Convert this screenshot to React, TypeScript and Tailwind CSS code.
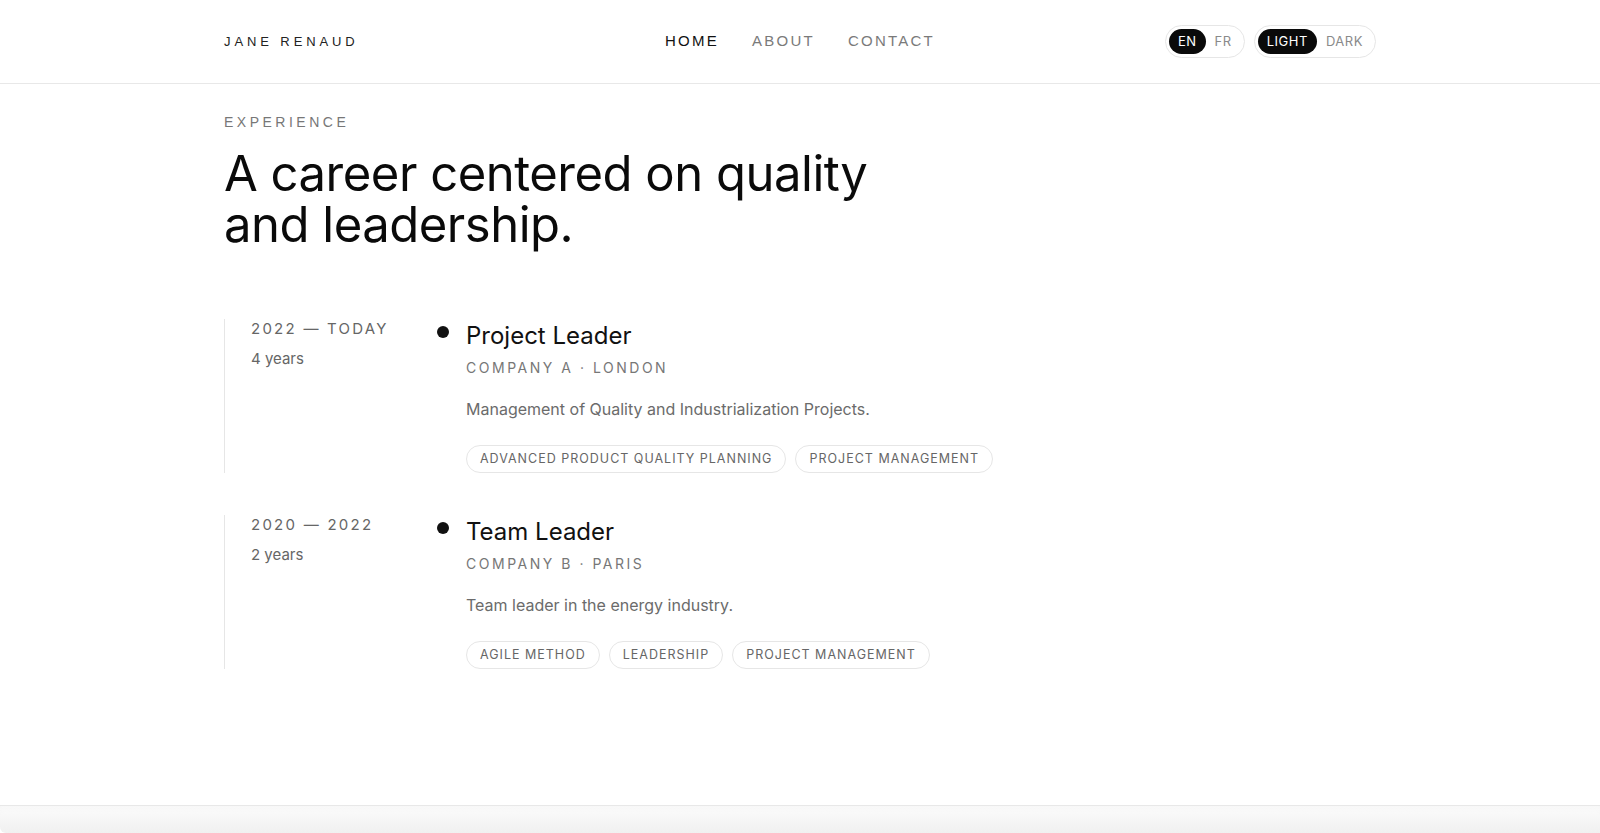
import React from 'react';

type Job = {
  period: string;
  duration: string;
  title: string;
  company: string;
  description: string;
  tags: string[];
};

const jobs: Job[] = [
  {
    period: '2022 — TODAY',
    duration: '4 years',
    title: 'Project Leader',
    company: 'COMPANY A · LONDON',
    description: 'Management of Quality and Industrialization Projects.',
    tags: ['ADVANCED PRODUCT QUALITY PLANNING', 'PROJECT MANAGEMENT'],
  },
  {
    period: '2020 — 2022',
    duration: '2 years',
    title: 'Team Leader',
    company: 'COMPANY B · PARIS',
    description: 'Team leader in the energy industry.',
    tags: ['AGILE METHOD', 'LEADERSHIP', 'PROJECT MANAGEMENT'],
  },
];

const Toggle = ({ options, active }: { options: string[]; active: string }) => (
  <div className="flex items-center rounded-full border border-[#e6e6e6] p-[3px]">
    {options.map(o => (
      <span
        key={o}
        className={
          o === active
            ? 'rounded-full bg-[#0a0a0a] px-[9px] py-[3px] text-[13px] tracking-[0.04em] text-white'
            : 'px-[9px] py-[3px] text-[13px] tracking-[0.04em] text-[#8a8a8a]'
        }
      >
        {o}
      </span>
    ))}
  </div>
);

export default function App() {
  return (
    <div className="flex min-h-[833px] flex-col bg-white text-[#111] [font-family:Inter,'Liberation_Sans',sans-serif]">
      {/* Header */}
      <header className="h-[84px] border-b border-[#e8e8e8]">
        <div className="mx-auto grid h-full max-w-[1152px] grid-cols-3 items-center">
          <div className="text-[13px] tracking-[0.3em] text-[#222] [font-family:'Liberation_Sans',Arial,sans-serif]">
            JANE RENAUD
          </div>
          <nav className="flex items-center justify-center gap-[33px] text-[15px] tracking-[0.15em] [font-family:'Liberation_Sans',Arial,sans-serif]">
            <span className="text-[#111]">HOME</span>
            <span className="text-[#7a7a7a]">ABOUT</span>
            <span className="text-[#7a7a7a]">CONTACT</span>
          </nav>
          <div className="flex items-center justify-end gap-[9px]">
            <Toggle options={['EN', 'FR']} active="EN" />
            <Toggle options={['LIGHT', 'DARK']} active="LIGHT" />
          </div>
        </div>
      </header>

      {/* Experience */}
      <main className="flex-1">
        <div className="mx-auto max-w-[1152px] pt-[28px]">
          <p className="text-[14px] tracking-[0.25em] text-[#777] [font-family:'Liberation_Sans',Arial,sans-serif]">
            EXPERIENCE
          </p>
          <h1 className="mt-[15px] text-[49px] leading-[51px] font-normal tracking-[-0.01em] text-[#0a0a0a]">
            A career centered on quality
            <br />
            and leadership.
          </h1>

          <div className="mt-[69px] flex flex-col gap-[42px]">
            {jobs.map(job => (
              <div key={job.title} className="grid grid-cols-[213px_1fr]">
                <div className="border-l border-[#e6e6e6] pl-[26px]">
                  <div className="text-[15px] leading-[20px] tracking-[0.15em] text-[#666]">{job.period}</div>
                  <div className="mt-[9px] text-[15px] text-[#666]">{job.duration}</div>
                </div>
                <div className="flex gap-[17px]">
                  <span className="mt-[7px] h-[12px] w-[12px] shrink-0 rounded-full bg-[#111]" />
                  <div className="pt-[2px]">
                    <h2 className="text-[24px] leading-[30px] font-normal text-[#111]">{job.title}</h2>
                    <div className="mt-[6px] text-[14px] tracking-[0.18em] text-[#777]">{job.company}</div>
                    <p className="mt-[19px] text-[16px] text-[#6b6b6b]">{job.description}</p>
                    <div className="mt-[24px] flex gap-[9px]">
                      {job.tags.map(t => (
                        <span
                          key={t}
                          className="flex h-[28px] items-center rounded-full border border-[#e6e6e6] px-[13px] text-[12.5px] tracking-[0.08em] text-[#666]"
                        >
                          {t}
                        </span>
                      ))}
                    </div>
                  </div>
                </div>
              </div>
            ))}
          </div>
        </div>
      </main>

      {/* Bottom edge */}
      <div className="h-[28px] rounded-bl-[6px] border-t border-[#e8e8e8] bg-gradient-to-b from-[#fcfcfc] to-[#f0f0f0] shadow-[inset_0_6px_10px_-6px_rgba(0,0,0,0.04)]" />
    </div>
  );
}
